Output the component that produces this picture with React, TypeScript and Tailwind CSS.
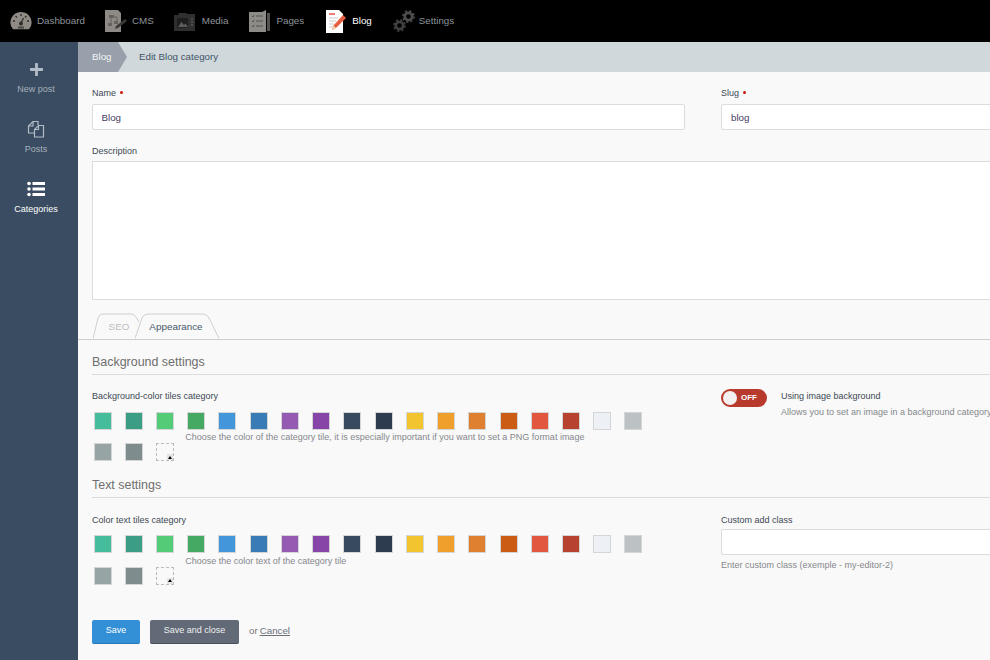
import React from "react";
import { FaPlus } from "react-icons/fa";

const COLORS = ["#45bc9c","#3a9d84","#54cb76","#45a964","#4496db","#397bb5","#955bb2","#8845a8","#384a5e","#2d3d4f","#f2c530","#efa02c","#df8030","#cb5c14","#e25740","#b74230","#edf0f4","#bcc1c4","#96a4a5","#7f8c8d"];

function Gauge() {
  return (
    <svg width="22" height="20" viewBox="0 0 22 20">
      <path d="M11 1a10.500 10.500 0 0 0-8 17.300h16A10.500 10.500 0 0 0 11 1z" fill="#8f8a84" />
      <path d="M3 10h2M5.500 5l1.500 1.500M11 3v2M16.500 5L15 6.500M19 10h-2" stroke="#2e2c2a" strokeWidth="1.300" />
      <path d="M11 12l2.500-5" stroke="#2e2c2a" strokeWidth="1.300" />
      <circle cx="11" cy="12.500" r="2" fill="#2e2c2a" />
      <rect x="8" y="15.500" width="6" height="2" fill="#4a4744" />
    </svg>
  );
}
function Cms() {
  return (
    <svg width="23" height="22" viewBox="0 0 23 22">
      <path d="M0 0h13l3 3v19H0z" fill="#8d8a85" />
      <path d="M4 5h5v3H4zM9 11h4v3H9zM3 13h4v3H3z" fill="#66635f" />
      <path d="M6 8v5M9 7h3v4" stroke="#66635f" fill="none" />
      <path d="M10 19l1-3 9-7 2 2-9 7z" fill="#3c3a38" />
    </svg>
  );
}
function Media() {
  return (
    <svg width="21" height="19" viewBox="0 0 21 19">
      <path d="M0 3h4l1-2h7l1 1h8v17H0z" fill="#2f2f2f" />
      <rect x="3" y="6" width="11" height="10" fill="#1e1e1e" />
      <path d="M4 15l3.500-5 2.500 3 1.500-1.500L14 15z" fill="#5c5c5c" />
      <path d="M17 7h2M17 10h2M17 13h2" stroke="#5a5a5a" strokeWidth="1.500" />
    </svg>
  );
}
function Pages() {
  return (
    <svg width="21" height="22" viewBox="0 0 21 22">
      <path d="M0 2h13l4-2v22H0z" fill="#8d8b87" />
      <path d="M3 6l1 1 1-2M3 11l1 1 1-2M3 16l1 1 1-2M7 6h7M7 11h7M7 16h7" stroke="#55534f" fill="none" />
      <rect x="18" y="3" width="3" height="18" fill="#55534f" />
    </svg>
  );
}
function BlogIcon() {
  return (
    <svg width="22" height="23" viewBox="0 0 22 23">
      <path d="M1 0h13l4 4v19H1z" fill="#ffffff" />
      <path d="M4 4h6" stroke="#e2574c" strokeWidth="1.500" />
      <path d="M4 8h9M4 11h7M4 14h5M4 17h4" stroke="#c9c9c9" />
      <path d="M7 20l1.500-4.500L18 5l3 3-10 10z" fill="#e85c3f" />
      <path d="M7 20l1.500-4.500L11 18z" fill="#f3d3a8" />
    </svg>
  );
}
function Gears() {
  return (
    <svg width="22" height="22" viewBox="0 0 22 22" fill="none">
      <circle cx="6.500" cy="15.500" r="3.700" stroke="#3f3f3f" strokeWidth="2.800" />
      <circle cx="6.500" cy="15.500" r="5.600" stroke="#3f3f3f" strokeWidth="1.600" strokeDasharray="2.200 2.200" />
      <circle cx="15.500" cy="6.500" r="3.700" stroke="#4d4d4d" strokeWidth="2.800" />
      <circle cx="15.500" cy="6.500" r="5.600" stroke="#4d4d4d" strokeWidth="1.600" strokeDasharray="2.200 2.200" />
    </svg>
  );
}
function PostsIcon() {
  return (
    <svg width="18" height="18" viewBox="0 0 18 18" fill="none" stroke="#b2bcc6" strokeWidth="1.200">
      <path d="M8 13H1.500V6L6 1.500h5V5" />
      <path d="M6 1.500V6H1.500" />
      <path d="M7.500 17V9.500L11.500 5.500h5V17z" fill="#3a4c61" />
      <path d="M11.500 5.500v4h-4" />
    </svg>
  );
}
function ListIcon() {
  return (
    <svg width="18" height="16" viewBox="0 0 18 16" fill="#ffffff">
      <circle cx="2" cy="2.500" r="1.800" />
      <circle cx="2" cy="8" r="1.800" />
      <circle cx="2" cy="13.500" r="1.800" />
      <rect x="5.500" y="1" width="12.500" height="3" />
      <rect x="5.500" y="6.500" width="12.500" height="3" />
      <rect x="5.500" y="12" width="12.500" height="3" />
    </svg>
  );
}

function NavItem({ icon, label, active, gap }: { icon: React.ReactNode; label: string; active?: boolean; gap: string }) {
  return (
    <div className={`flex items-center ${gap}`}>
      {icon}
      <span className={active ? "text-white" : "text-[#8d9499]"}>{label}</span>
    </div>
  );
}

function SideItem({ icon, label, active }: { icon: React.ReactNode; label: string; active?: boolean }) {
  return (
    <div className="flex h-[60px] flex-col items-center pr-[6px]">
      <div className="flex h-[20px] items-center justify-center">{icon}</div>
      <span className={`mt-[3px] text-[9px] leading-[14px] ${active ? "text-white" : "text-[#a5afba]"}`}>{label}</span>
    </div>
  );
}

function Swatch({ color }: { color: string }) {
  return <div className="h-[18px] w-[18px] shrink-0 border border-[#d3d5d6]" style={{ backgroundColor: color }} />;
}

function Palette({ hint }: { hint: string }) {
  return (
    <div className="flex w-[575px] flex-wrap items-start gap-x-[13.240px] gap-y-[13.300px] pl-[1.500px]">
      {COLORS.map((c, i) => <Swatch key={i} color={c} />)}
      <div className="relative h-[18px] w-[18px] shrink-0 border border-dashed border-[#bdbdbd]">
        <div className="absolute right-0 bottom-0 flex h-[6px] w-[6px] items-center justify-center bg-[#e4e4e4]">
          <div className="h-0 w-0 border-x-[2px] border-b-[3px] border-x-transparent border-b-black" />
        </div>
      </div>
      <span className="mt-[-12px] ml-[-2px] text-[9px] leading-[12px] whitespace-nowrap text-[#85888c]">{hint}</span>
    </div>
  );
}

function Tab({ label, active, width }: { label: string; active?: boolean; width: string }) {
  return (
    <div className={`relative flex h-[26px] items-center justify-center ${width} ${active ? "z-10 ml-[-5px] text-[#46586b]" : "text-[#bdbdbd]"}`}>
      <svg className="absolute inset-0 h-full w-full" viewBox="0 0 84 26" preserveAspectRatio="none">
        <path
          d={active ? "M0 25.500L7 5Q9 1 13 1H68Q72 1 74 5L84 25.500" : "M0 25.500L9 5Q11 1 17 1H68Q74 1 78 5L82 9"}
          fill={active ? "#f9f9f9" : "none"}
          stroke="#cfcfcf"
          strokeWidth="1"
          vectorEffect="non-scaling-stroke"
        />
      </svg>
      <span className={`relative mt-[2px] ${active ? "ml-[-2px]" : "ml-[5px]"}`}>{label}</span>
    </div>
  );
}

export default function App() {
  return (
    <div className="flex h-[660px] w-[990px] flex-col overflow-hidden bg-[#f9f9f9] font-['Liberation_Sans',Arial,sans-serif] text-[10px]">
      <header className="flex h-[42px] shrink-0 items-center bg-black pl-[10px] text-[9.800px]">
        <NavItem icon={<Gauge />} label="Dashboard" gap="gap-[5px]" />
        <div className="ml-[20px]"><NavItem icon={<Cms />} label="CMS" gap="gap-[4px]" /></div>
        <div className="ml-[20px]"><NavItem icon={<Media />} label="Media" gap="gap-[7px]" /></div>
        <div className="ml-[21px]"><NavItem icon={<Pages />} label="Pages" gap="gap-[6px]" /></div>
        <div className="ml-[21px]"><NavItem icon={<BlogIcon />} label="Blog" gap="gap-[5px]" active /></div>
        <div className="ml-[21px]"><NavItem icon={<Gears />} label="Settings" gap="gap-[4px]" /></div>
      </header>
      <div className="flex min-h-0 flex-1">
        <aside className="flex w-[78px] shrink-0 flex-col bg-[#3a4c61] pt-[17px]">
          <SideItem icon={<FaPlus size={15} color="#b2bcc6" />} label="New post" />
          <SideItem icon={<PostsIcon />} label="Posts" />
          <SideItem icon={<ListIcon />} label="Categories" active />
        </aside>
        <main className="min-w-0 flex-1">
          <div className="flex h-[30px] items-center bg-[#d1d8db]">
            <div className="flex h-full w-[40px] items-center bg-[#97a0ab] pl-[14px] text-[9.750px] text-[#f1f3f4]">Blog</div>
            <div className="h-0 w-0 border-y-[15px] border-l-[9px] border-y-transparent border-l-[#97a0ab]" />
            <span className="ml-[12px] text-[9.750px] text-[#3f5468]">Edit Blog category</span>
          </div>

          <div className="w-[1240px] pt-[14px] pl-[14px] text-[9px] text-[#3d4854]">
            <div className="flex gap-[36px]">
              <div className="w-[593px]">
                <div className="flex h-[16px] items-center gap-[4px]">Name <span className="mb-[3px] h-[3px] w-[3px] rounded-full bg-[#c8140c]" /></div>
                <input readOnly value="Blog" className="mt-[2px] h-[26px] w-full rounded-[2px] border border-[#dcdcdc] bg-white px-[8.500px] text-[9.750px] text-[#45405f] outline-none" />
              </div>
              <div className="w-[593px]">
                <div className="flex h-[16px] items-center gap-[4px]">Slug <span className="mb-[3px] h-[3px] w-[3px] rounded-full bg-[#c8140c]" /></div>
                <input readOnly value="blog" className="mt-[2px] h-[26px] w-full rounded-[2px] border border-[#dcdcdc] bg-white px-[9px] text-[9.750px] text-[#45405f] outline-none" />
              </div>
            </div>
            <div className="mt-[13px] h-[16px] leading-[16px]">Description</div>
            <div className="mt-[2px] h-[139px] w-full border border-[#dcdcdc] bg-white" />
          </div>

          <div className="mt-[13px] flex border-b border-[#cfcfcf] pl-[15px] text-[9.900px]">
            <Tab label="SEO" width="w-[47px]" />
            <Tab label="Appearance" width="w-[84px]" active />
          </div>

          <div className="w-[1240px] pl-[14px]">
            <h3 className="mt-[13px] h-[22px] border-b border-[#dcdcdc] text-[12.450px] leading-[19px] text-[#6e6e6e]">Background settings</h3>
            <div className="mt-[14px] flex">
              <div className="w-[629px]">
                <div className="h-[16px] text-[9px] leading-[14px] text-[#3d4854]">Background-color tiles category</div>
                <div className="mt-[7px]">
                  <Palette hint="Choose the color of the category tile, it is especially important if you want to set a PNG format image" />
                </div>
              </div>
              <div className="flex">
                <div className="flex h-[18px] w-[46px] items-center rounded-full bg-[#b73a2c]">
                  <span className="ml-[2px] h-[14px] w-[14px] rounded-full bg-[#f4f0f0]" />
                  <span className="ml-[4px] text-[8px] font-bold text-white">OFF</span>
                </div>
                <div className="ml-[14px] text-[9px] leading-[14px]">
                  <div className="text-[#3d4854]">Using image background</div>
                  <div className="mt-[2px] whitespace-nowrap text-[#85888c]">Allows you to set an image in a background category</div>
                </div>
              </div>
            </div>

            <h3 className="mt-[15px] h-[22px] border-b border-[#dcdcdc] text-[12.450px] leading-[19px] text-[#6e6e6e]">Text settings</h3>
            <div className="mt-[15px] flex">
              <div className="w-[629px]">
                <div className="h-[16px] text-[9px] leading-[14px] text-[#3d4854]">Color text tiles category</div>
                <div className="mt-[6px]">
                  <Palette hint="Choose the color text of the category tile" />
                </div>
              </div>
              <div className="w-[593px]">
                <div className="h-[16px] text-[9px] leading-[14px] text-[#3d4854]">Custom add class</div>
                <div className="h-[26px] w-full rounded-[2px] border border-[#dcdcdc] bg-white" />
                <div className="mt-[3px] text-[9px] leading-[14px] text-[#85888c]">Enter custom class (exemple - my-editor-2)</div>
              </div>
            </div>

            <div className="mt-[35px] flex items-center text-[9px]">
              <button className="h-[24px] w-[48px] rounded-[2px] border-b border-[#2a78b8] bg-[#3390d6] text-white">Save</button>
              <button className="ml-[10px] h-[24px] w-[89px] rounded-[2px] border-b border-[#4a505c] bg-[#626977] text-[#f0f0f0]">Save and close</button>
              <span className="ml-[10px] text-[9.750px] text-[#777]">or</span>
              <a className="ml-[2px] text-[9.750px] text-[#6a6f78] underline">Cancel</a>
            </div>
          </div>
        </main>
      </div>
    </div>
  );
}
